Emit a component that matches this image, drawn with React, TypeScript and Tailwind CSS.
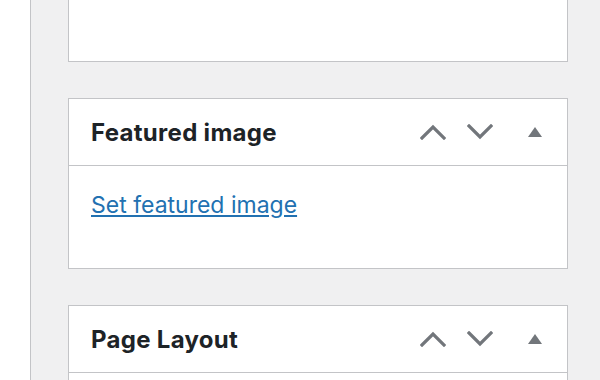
import React from "react";

function ChevronUp() {
  return (
    <svg width="26" height="16" viewBox="0 0 26 16" fill="none">
      <polyline points="2,14 13,3 24,14" stroke="#72767b" strokeWidth="3.2" strokeLinecap="square" strokeLinejoin="miter" />
    </svg>
  );
}

function ChevronDown() {
  return (
    <svg width="26" height="16" viewBox="0 0 26 16" fill="none">
      <polyline points="2,2 13,13 24,2" stroke="#72767b" strokeWidth="3.2" strokeLinecap="square" strokeLinejoin="miter" />
    </svg>
  );
}

function Triangle() {
  return (
    <svg width="14" height="10" viewBox="0 0 14 10">
      <polygon points="7,0 14,10 0,10" fill="#72767b" />
    </svg>
  );
}

function Header({ title }: { title: string }) {
  return (
    <div className="flex h-[67px] shrink-0 items-center border-b border-[#c3c4c7] pl-[22px]">
      <h2 className="flex-1 pt-[1px] text-[24px] font-bold leading-[32px] tracking-[0.3px] text-[#1d2327]">{title}</h2>
      <div className="flex items-center">
        <button className="flex w-[47px] items-center justify-center">
          <ChevronUp />
        </button>
        <button className="flex w-[47px] items-center justify-center">
          <ChevronDown />
        </button>
        <button className="flex w-[64px] items-center justify-center">
          <Triangle />
        </button>
      </div>
    </div>
  );
}

export default function App() {
  return (
    <div
      className="flex h-[380px] w-[600px] overflow-hidden bg-[#f0f0f1]"
      style={{ fontFamily: "Inter, 'Noto Sans', sans-serif" }}
    >
      <div className="h-full w-[31px] shrink-0 border-r border-[#c3c4c7] bg-white" />
      <div className="flex flex-col pl-[37px]">
        <div className="h-[62px] w-[500px] shrink-0 border border-t-0 border-[#c3c4c7] bg-white" />
        <div className="mt-[36px] w-[500px] shrink-0 border border-[#c3c4c7] bg-white">
          <Header title="Featured image" />
          <div className="h-[102px] pl-[22px] pt-[23px]">
            <a href="#" className="text-[23px] leading-[32px] text-[#2271b1] underline">
              Set featured image
            </a>
          </div>
        </div>
        <div className="mt-[36px] w-[500px] shrink-0 border border-[#c3c4c7] bg-white">
          <Header title="Page Layout" />
          <div className="h-[60px]" />
        </div>
      </div>
    </div>
  );
}
